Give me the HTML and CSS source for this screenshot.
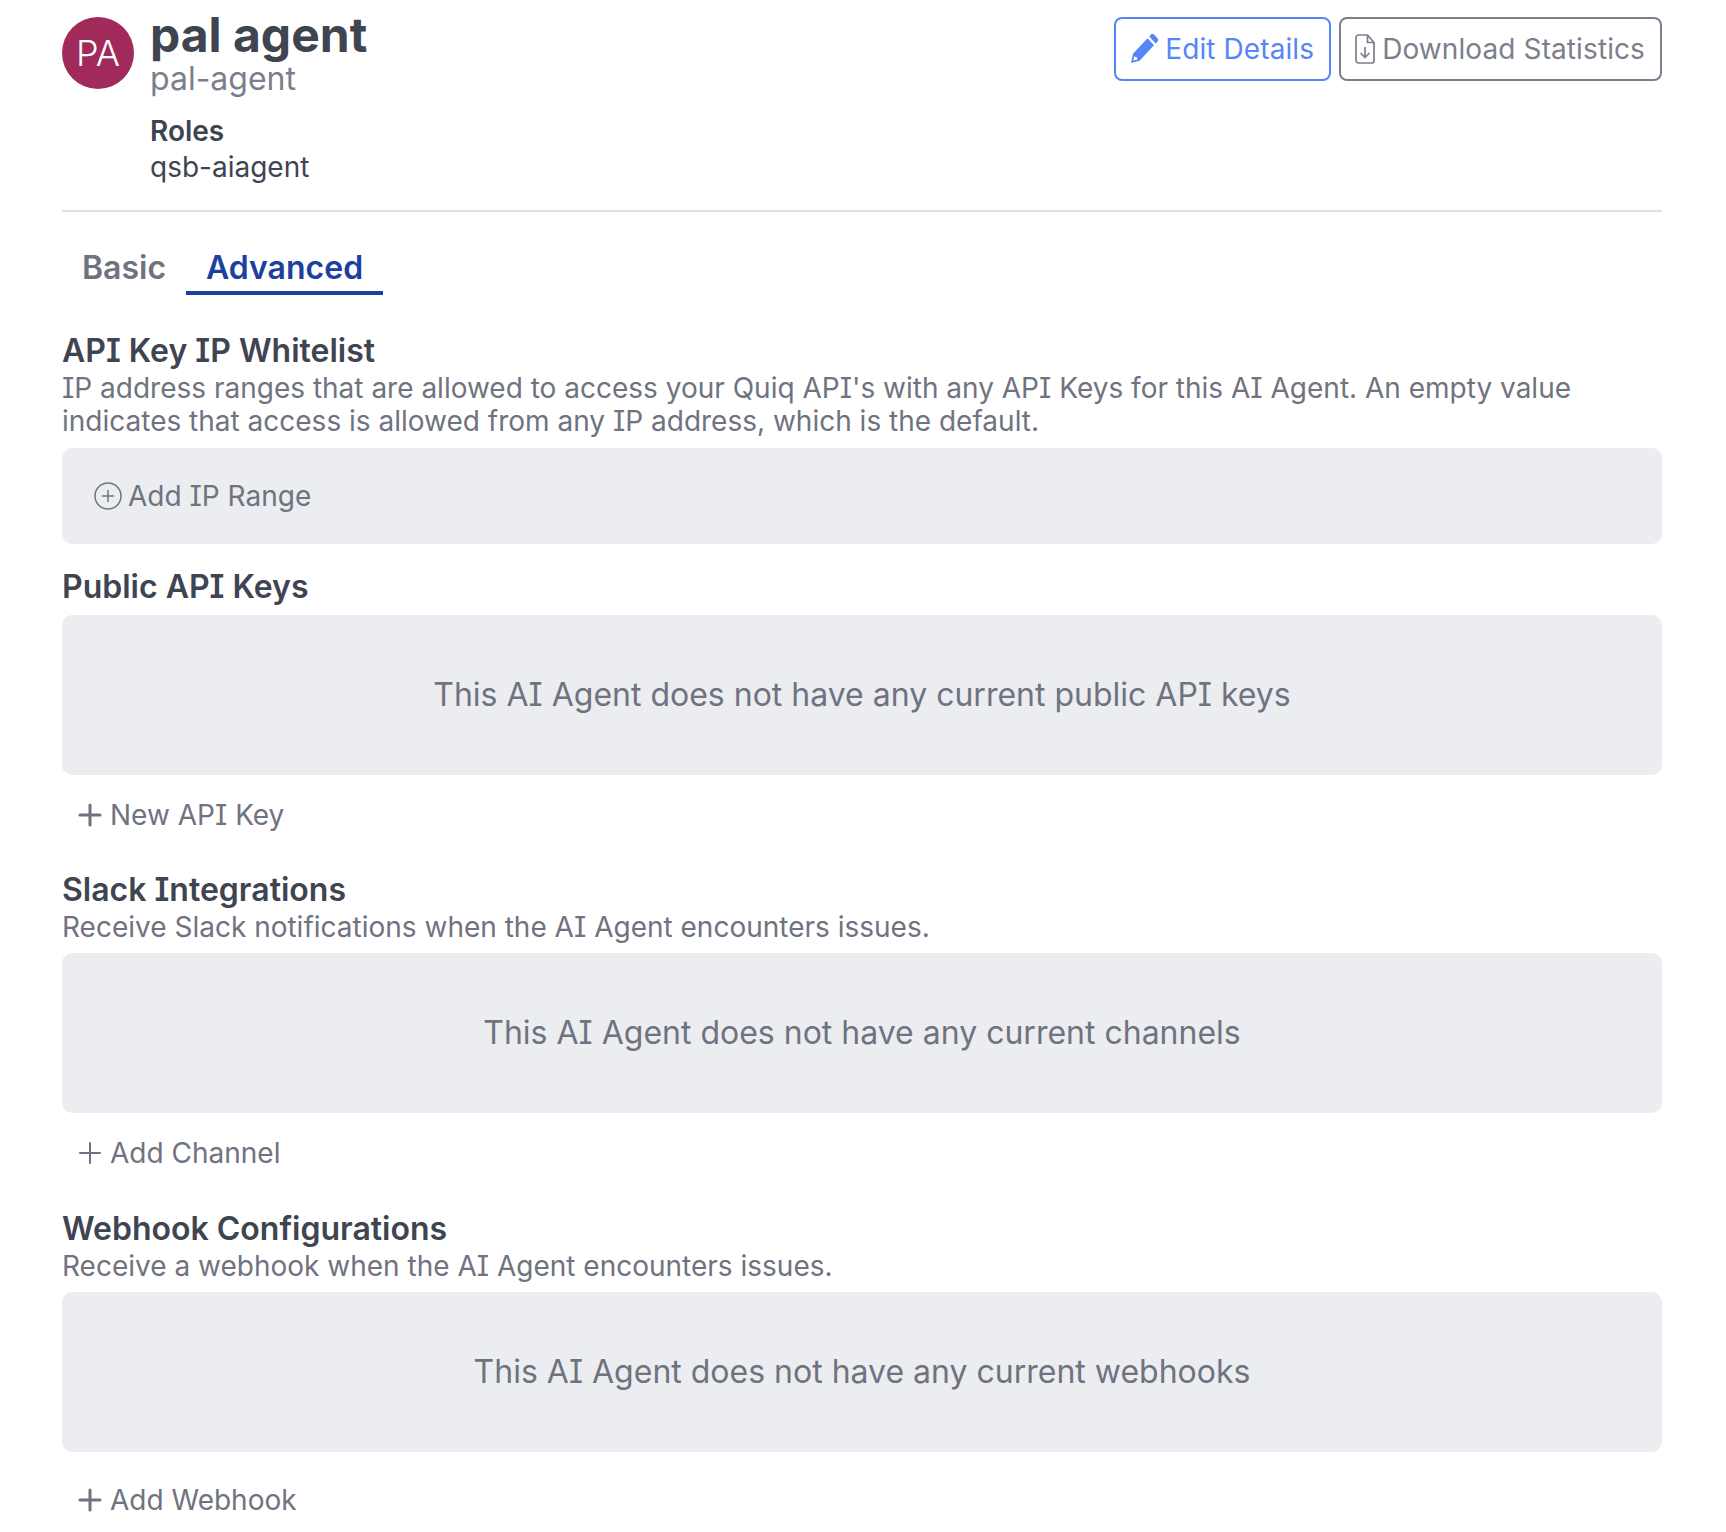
FILE: index.html
```html
<!DOCTYPE html>
<html lang="en">
<head>
    <meta charset="UTF-8">
    <title>pal agent</title>
    <link rel="stylesheet" href="styles.css">
</head>
<body>
    <div class="page">
        <div class="header">
            <div class="avatar">PA</div>
            <div class="identity">
                <h1 class="name">pal agent</h1>
                <div class="username">pal-agent</div>
                <div class="roles-label">Roles</div>
                <div class="roles-value">qsb-aiagent</div>
            </div>
            <div class="actions">
                <button class="btn btn-primary">
                    <svg class="btn-icon" width="28" height="30" viewBox="0 0 28 28" preserveAspectRatio="none"><path fill="currentColor" fill-rule="evenodd" d="M1 27l2-8.500L17.500 4l6.500 6.500L9.500 25zM4.300 20.600L3.300 24.700 7.400 23.700 6.900 21.800 4.900 21.300z"/><path fill="currentColor" d="M19.200 2.300l1.600-1.600a2.400 2.400 0 0 1 3.400 0l3.100 3.100a2.400 2.400 0 0 1 0 3.400l-1.600 1.600z"/></svg>
                    Edit Details
                </button>
                <button class="btn btn-secondary">
                    <svg class="btn-icon" width="20" height="30" viewBox="0 0 20 30"><path fill="none" stroke="currentColor" stroke-width="1.700" stroke-linejoin="round" stroke-linecap="round" d="M3.500 1h9l6.500 7.500v18a2.500 2.500 0 0 1-2.500 2.500h-13A2.500 2.500 0 0 1 1 26.500v-23A2.500 2.500 0 0 1 3.500 1zM12.500 1v7.500H19M10 13.500v10M6 19.500l4 4 4-4"/></svg>
                    Download Statistics
                </button>
            </div>
        </div>

        <div class="tabs">
            <div class="tab">Basic</div>
            <div class="tab tab-active">Advanced</div>
        </div>

        <section class="section section-ip">
            <h2 class="section-title">API Key IP Whitelist</h2>
            <p class="section-desc">IP address ranges that are allowed to access your Quiq API's with any API Keys for this AI Agent. An empty value indicates that access is allowed from any IP address, which is the default.</p>
            <div class="panel panel-add">
                <svg class="add-circle" width="28" height="28" viewBox="0 0 28 28"><circle cx="14" cy="14" r="13" fill="none" stroke="currentColor" stroke-width="1.500"/><path fill="none" stroke="currentColor" stroke-width="1.500" stroke-linecap="round" d="M14 8.500v11M8.500 14h11"/></svg>
                Add IP Range
            </div>
        </section>

        <section class="section section-keys">
            <h2 class="section-title">Public API Keys</h2>
            <div class="panel panel-empty">This AI Agent does not have any current public API keys</div>
            <div class="add-link">
                <svg class="plus" width="24" height="24" viewBox="0 0 24 24"><path fill="none" stroke="currentColor" stroke-width="3" stroke-linecap="round" d="M12 2v20M2 12h20"/></svg>
                New API Key
            </div>
        </section>

        <section class="section section-slack">
            <h2 class="section-title">Slack Integrations</h2>
            <p class="section-desc">Receive Slack notifications when the AI Agent encounters issues.</p>
            <div class="panel panel-empty">This AI Agent does not have any current channels</div>
            <div class="add-link">
                <svg class="plus" width="24" height="24" viewBox="0 0 24 24"><path fill="none" stroke="currentColor" stroke-width="2" stroke-linecap="round" d="M12 2v20M2 12h20"/></svg>
                Add Channel
            </div>
        </section>

        <section class="section section-webhook">
            <h2 class="section-title">Webhook Configurations</h2>
            <p class="section-desc">Receive a webhook when the AI Agent encounters issues.</p>
            <div class="panel panel-empty">This AI Agent does not have any current webhooks</div>
            <div class="add-link add-link-last">
                <svg class="plus" width="24" height="24" viewBox="0 0 24 24"><path fill="none" stroke="currentColor" stroke-width="3" stroke-linecap="round" d="M12 2v20M2 12h20"/></svg>
                Add Webhook
            </div>
        </section>
    </div>
</body>
</html>
```

FILE: styles.css
```css
body {
    margin: 0;
    background-color: #fff;
    color: #3f4451;
    font-family: Inter, sans-serif;
    font-feature-settings: "cv08";
}

.page {
    padding: 0 64px 0 62px;
}

.header {
    display: flex;
    align-items: flex-start;
    padding-bottom: 25px;
    border-bottom: 2px solid #dfdfe6;
}

.avatar {
    flex: none;
    width: 72px;
    height: 72px;
    margin-top: 17px;
    border-radius: 50%;
    background-color: #a12a5a;
    color: #fff;
    font-size: 36px;
    font-weight: 300;
    line-height: 72px;
    text-align: center;
}

.identity {
    margin-left: 16px;
}

.name {
    margin: 0;
    padding-top: 7px;
    font-size: 48px;
    font-weight: 700;
    line-height: 56px;
}

.username {
    color: #7b7f8c;
    font-size: 32px;
    line-height: 32px;
}

.roles-label {
    margin-top: 18px;
    font-size: 28px;
    font-weight: 600;
    line-height: 36px;
}

.roles-value {
    font-size: 28px;
    line-height: 36px;
}

.actions {
    display: flex;
    gap: 8px;
    margin-left: auto;
    margin-top: 17px;
}

.btn {
    display: flex;
    align-items: center;
    gap: 7px;
    height: 64px;
    padding: 0 15px 0 14px;
    border: 2px solid;
    border-radius: 8px;
    background: none;
    font-family: inherit;
    font-feature-settings: inherit;
    font-size: 28px;
    letter-spacing: .1px;
}

.btn-primary {
    color: #5585f6;
    border-color: #5585f6;
}

.btn-secondary {
    color: #7b7f8c;
    border-color: #7b7f8c;
}

.tabs {
    display: flex;
    margin-top: 30px;
}

.tab {
    padding: 2px 20px 0;
    color: #6f7380;
    font-size: 32px;
    font-weight: 600;
    line-height: 47px;
    border-bottom: 4px solid transparent;
}

.tab-active {
    color: #1d40a0;
    border-bottom-color: #1d40a0;
}

.section-title {
    margin: 0;
    font-size: 32px;
    font-weight: 600;
    line-height: 40px;
}

.section-desc {
    margin: 1px 0 0;
    color: #6f7380;
    font-size: 28px;
    line-height: 33px;
}

.section-ip { margin-top: 36px; }
.section-keys { margin-top: 23px; }
.section-slack { margin-top: 35px; }
.section-webhook { margin-top: 36px; }

.panel {
    border-radius: 10px;
    background-color: #ecedf1;
    color: #6f7380;
}

.section-desc + .panel {
    margin-top: 9px;
}

.section-title + .panel {
    margin-top: 8px;
}

.section-desc + .panel-add {
    margin-top: 10px;
}

.panel-add {
    display: flex;
    align-items: center;
    gap: 6px;
    height: 96px;
    padding-left: 32px;
    font-size: 28px;
}

.panel-empty {
    height: 160px;
    font-size: 32px;
    line-height: 160px;
    text-align: center;
}

.add-link {
    display: flex;
    align-items: center;
    gap: 8px;
    height: 40px;
    margin-top: 20px;
    padding-left: 16px;
    color: #6f7380;
    font-size: 28px;
}

.add-link-last {
    margin-top: 28px;
}
```
